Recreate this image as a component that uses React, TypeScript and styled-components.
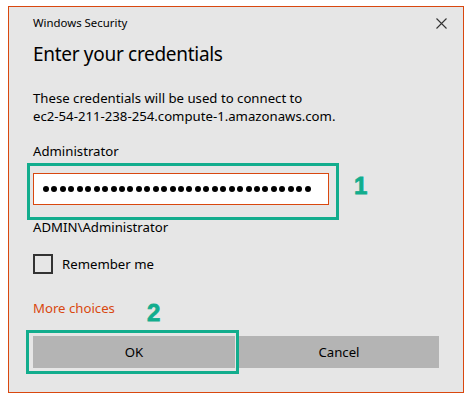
import * as React from "react"
import styled, { createGlobalStyle } from "styled-components"

const GlobalStyle = createGlobalStyle`
  html, body {
    margin: 0;
    padding: 0;
    background: #ffffff;
  }
  body {
    font-family: "Noto Sans", "Liberation Sans", sans-serif;
    color: #000;
  }
`

const Page = styled.div`
  padding: 6px 0 0 8px;
  width: 474px;
  height: 404px;
  box-sizing: border-box;
`

const Dialog = styled.div`
  position: relative;
  width: 456px;
  height: 387px;
  box-sizing: border-box;
  border: 1px solid #d9480f;
  background: #e6e6e6;
  display: flex;
  flex-direction: column;
  padding: 8px 16px 0 24px;
`

const Header = styled.div`
  display: flex;
  align-items: center;
  justify-content: space-between;
  height: 16px;
`

const Caption = styled.span`
  font-size: 11.4px;
  line-height: 16px;
`

const CloseButton = styled.button`
  display: flex;
  align-items: center;
  justify-content: center;
  width: 12px;
  height: 12px;
  padding: 0;
  border: none;
  background: transparent;
  cursor: pointer;
`

const Heading = styled.h1`
  margin: 9px 0 0;
  font-size: 19px;
  font-weight: 400;
  letter-spacing: -0.3px;
  line-height: 28px;
`

const Text = styled.p<{ $top: number; $color?: string }>`
  margin: ${(p) => p.$top}px 0 0;
  font-size: 13.2px;
  line-height: 18px;
  color: ${(p) => p.$color || "#000"};
`

const FieldWrap = styled.div`
  position: relative;
  margin-top: 13px;
  width: 296px;
`

const PasswordBox = styled.div`
  display: flex;
  align-items: center;
  gap: 2.45px;
  height: 32px;
  box-sizing: border-box;
  padding-left: 9px;
  border: 1px solid #d9480f;
  background: #ffffff;
`

const Dot = styled.span`
  width: 6px;
  height: 6px;
  border-radius: 50%;
  background: #000;
  flex: none;
`

const CheckRow = styled.label`
  display: flex;
  align-items: center;
  gap: 9px;
  margin-top: 18px;
  height: 20px;
  font-size: 13.2px;
  cursor: pointer;
`

const CheckBox = styled.span`
  width: 20px;
  height: 20px;
  box-sizing: border-box;
  border: 2px solid #333;
`

const Link = styled.a`
  display: block;
  margin-top: 25px;
  font-size: 13.2px;
  line-height: 18px;
  color: #d9480f;
  text-decoration: none;
  cursor: pointer;
`

const Buttons = styled.div`
  display: flex;
  gap: 4px;
  margin-top: 19px;
`

const Button = styled.button<{ $w: number }>`
  position: relative;
  width: ${(p) => p.$w}px;
  height: 32px;
  border: none;
  background: #b4b4b4;
  font-family: "Noto Sans", "Liberation Sans", sans-serif;
  font-size: 13.2px;
  color: #000;
  padding: 0;
  cursor: pointer;
`

const Highlight = styled.span<{ $l: number; $t: number; $w: number; $h: number }>`
  position: absolute;
  left: ${(p) => p.$l}px;
  top: ${(p) => p.$t}px;
  width: ${(p) => p.$w}px;
  height: ${(p) => p.$h}px;
  box-sizing: border-box;
  border: 3px solid #12ad8d;
  pointer-events: none;
`

const Step = styled.span<{ $l: number; $t: number }>`
  position: absolute;
  left: ${(p) => p.$l}px;
  top: ${(p) => p.$t}px;
  font-family: "Liberation Sans", Arial, sans-serif;
  font-weight: 700;
  font-size: 24px;
  line-height: 24px;
  color: #12ad8d;
  -webkit-text-stroke: 0.8px #12ad8d;
`

const CloseIcon = () => (
  <svg width="11" height="11" viewBox="0 0 11 11">
    <path d="M0.5 0.5 L10.5 10.5 M10.5 0.5 L0.5 10.5" stroke="#333" strokeWidth="1.1" fill="none" />
  </svg>
)

export default function App() {
  return (
    <Page>
      <GlobalStyle />
      <Dialog>
        <Header>
          <Caption>Windows Security</Caption>
          <CloseButton aria-label="Close">
            <CloseIcon />
          </CloseButton>
        </Header>
        <Heading>Enter your credentials</Heading>
        <Text $top={21}>
          These credentials will be used to connect to
          <br />
          ec2-54-211-238-254.compute-1.amazonaws.com.
        </Text>
        <Text $top={17}>Administrator</Text>
        <FieldWrap>
          <PasswordBox>
            {Array.from({ length: 32 }).map((_, i) => (
              <Dot key={i} />
            ))}
          </PasswordBox>
          <Highlight $l={-6} $t={-10} $w={312} $h={57} />
          <Step $l={321} $t={1}>1</Step>
        </FieldWrap>
        <Text $top={13}>ADMIN\Administrator</Text>
        <CheckRow>
          <CheckBox />
          Remember me
        </CheckRow>
        <Link>More choices</Link>
        <Buttons>
          <Button $w={202}>
            OK
            <Highlight $l={-7} $t={-6} $w={213} $h={44} />
            <Step $l={114} $t={-35}>2</Step>
          </Button>
          <Button $w={200}>Cancel</Button>
        </Buttons>
      </Dialog>
    </Page>
  )
}
